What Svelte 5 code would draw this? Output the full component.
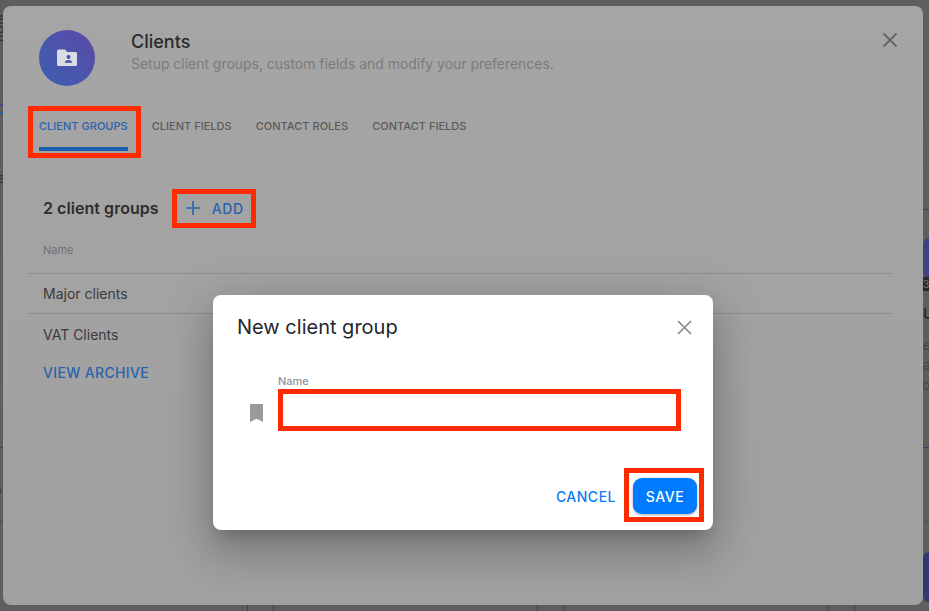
<script>
  const tabs = ['CLIENT GROUPS', 'CLIENT FIELDS', 'CONTACT ROLES', 'CONTACT FIELDS'];
  const groups = ['Major clients', 'VAT Clients'];
</script>

<div class="page">
  <!-- bits of the page behind the dimmed dialog, only the edges show -->
  <div class="behind">
    <span class="line l1"></span>
    <span class="line l2"></span>
    <span class="line l3"></span>
    <span class="line r1"></span>
    <span class="line r2"></span>
    <span class="line r3"></span>
    <span class="line t1"></span>
    <span class="line t2"></span>
    <span class="word w1">Nov</span>
    <span class="word w2">le</span>
    <span class="word w3">o</span>
    <span class="word w4">UI</span>
    <span class="word w5">e</span>
    <span class="word w6">a</span>
    <span class="word w7">o</span>
    <span class="logo"></span>
    <span class="tag">35</span>
    <span class="ball"></span>
    <span class="tick k1"></span>
    <span class="tick k2"></span>
    <span class="tick k3"></span>
    <span class="tick k4"></span>
    <span class="tick k5"></span>
    <span class="tick k6"></span>
  </div>

  <section class="settings">
    <header class="head">
      <div class="avatar">
        <svg width="22" height="20" viewBox="0 0 22 20">
          <path fill="#dcdce4" d="M2.500 1.500h6.500l2.200 2.400h8.300a1.500 1.500 0 0 1 1.500 1.500v11a1.500 1.500 0 0 1-1.500 1.500h-17A1.500 1.500 0 0 1 1 16.900v-13.900a1.500 1.500 0 0 1 1.500-1.500z" />
          <circle cx="12.500" cy="8.900" r="2" fill="#4a50a8" />
          <path fill="#4a50a8" d="M8.600 14.800c0-1.900 2.100-2.900 3.900-2.900s3.900 1 3.900 2.900z" />
        </svg>
      </div>
      <div class="titles">
        <h1>Clients</h1>
        <p>Setup client groups, custom fields and modify your preferences.</p>
      </div>
      <button class="close" aria-label="Close">
        <svg width="16" height="16" viewBox="0 0 16 16"><path d="M1.500 1.500l13 13M14.500 1.500l-13 13" stroke="#666" stroke-width="1.800" fill="none" /></svg>
      </button>
    </header>

    <nav class="tabs">
      {#each tabs as tab, i}
        <div class="tab" class:active={i === 0}>{tab}</div>
      {/each}
    </nav>

    <div class="count-row">
      <strong>2 client groups</strong>
      <div class="add">
        <svg width="14" height="14" viewBox="0 0 14 14"><path d="M7 0v14M0 7h14" stroke="#2a62ad" stroke-width="1.600" /></svg>
        <span>ADD</span>
      </div>
    </div>

    <div class="table">
      <div class="th">Name</div>
      {#each groups as group}
        <div class="td">{group}</div>
      {/each}
    </div>
    <div class="archive">VIEW ARCHIVE</div>
  </section>

  <div class="modal">
    <div class="modal-head">
      <h2>New client group</h2>
      <button class="close" aria-label="Close">
        <svg width="15" height="15" viewBox="0 0 15 15"><path d="M1 1l13 13M14 1L1 14" stroke="#8a8a8a" stroke-width="1.700" fill="none" /></svg>
      </button>
    </div>
    <div class="field">
      <svg class="bookmark" width="15" height="18" viewBox="0 0 15 18"><path fill="#9a9a9a" d="M2 0h11a1 1 0 0 1 1 1v17l-6.500-3.200L1 18V1a1 1 0 0 1 1-1z" /></svg>
      <div class="field-main">
        <label for="name">Name</label>
        <input id="name" />
      </div>
    </div>
    <div class="actions">
      <span class="cancel">CANCEL</span>
      <button class="save">SAVE</button>
    </div>
  </div>

  <span class="mark m-tab"></span>
  <span class="mark m-add"></span>
  <span class="mark m-input"></span>
  <span class="mark m-save"></span>
</div>

<style>
  :global(body) {
    margin: 0;
    font-family: Inter, "Liberation Sans", sans-serif;
  }

  .page {
    position: relative;
    width: 929px;
    height: 611px;
    overflow: hidden;
    background: #5e5e5e;
    padding: 6px 6px 6px 3px;
    box-sizing: border-box;
  }

  .behind span {
    position: absolute;
  }

  .line {
    height: 1px;
    background: #474747;
  }

  .l1 { left: 0; width: 3px; top: 447px; }
  .l2 { left: 0; width: 3px; top: 521px; }
  .l3 { left: 0; width: 3px; top: 179px; background: #4b4a78; }
  .r1 { right: 0; width: 6px; top: 209px; background: #3c3a70; }
  .r2 { right: 0; width: 6px; top: 447px; background: #3c3a70; }
  .r3 { right: 0; width: 6px; top: 521px; background: #3d5a3a; }
  .t1 { left: 0; width: 3px; top: 104px; background: #3f4a80; height: 2px; }
  .t2 { left: 0; width: 3px; top: 112px; background: #2f5f92; height: 2px; }

  .word {
    font-size: 14px;
    line-height: 16px;
    color: #333;
  }

  .w1 { left: -8px; top: 14px; font-size: 15px; writing-mode: vertical-rl; }
  .w2 { left: -6px; top: 170px; }
  .w3 { left: -7px; top: 482px; }
  .w4 { left: 923px; top: 306px; font-weight: 700; color: #2e2e2e; }
  .w5 { left: 923px; top: 337px; color: #444; }
  .w6 { left: 923px; top: 357px; color: #444; }
  .w7 { left: 922px; top: 377px; color: #444; }

  .logo {
    right: 0;
    top: 238px;
    width: 6px;
    height: 40px;
    background: #3f4280;
    border-radius: 20px 0 0 20px;
  }

  .tag {
    right: 0;
    top: 277px;
    width: 6px;
    height: 14px;
    overflow: hidden;
    background: #2a2a2a;
    color: #777;
    font-size: 10px;
    line-height: 14px;
  }

  .ball {
    right: 0;
    top: 552px;
    width: 6px;
    height: 50px;
    background: #34386e;
    border-radius: 30px 0 0 30px;
  }

  .tick {
    top: 605px;
    width: 1px;
    height: 6px;
    background: #35482f;
  }

  .k1 { left: 247px; }
  .k2 { left: 273px; }
  .k3 { left: 537px; }
  .k4 { left: 563px; }
  .k5 { left: 828px; }
  .k6 { left: 854px; }

  .settings {
    position: relative;
    height: 599px;
    background: linear-gradient(#a5a5a5, #a0a0a0);
    border-radius: 8px;
    box-sizing: border-box;
    padding: 24px 31px 0 25px;
  }

  .head {
    display: flex;
    align-items: flex-start;
    padding-left: 11px;
  }

  .avatar {
    width: 56px;
    height: 56px;
    border-radius: 50%;
    background: linear-gradient(45deg, #3b5fb0, #5c4aa8);
    display: flex;
    align-items: center;
    justify-content: center;
    flex: none;
  }

  .titles {
    margin-left: 36px;
    flex: 1;
  }

  h1 {
    margin: 1px 0 0;
    font-size: 18px;
    line-height: 22px;
    font-weight: 500;
    color: #2a2a2c;
  }

  .titles p {
    margin: 1px 0 0;
    font-size: 14px;
    line-height: 20px;
    letter-spacing: -0.03px;
    color: #7b7b7b;
  }

  .close {
    border: 0;
    padding: 0;
    background: none;
    display: flex;
  }

  .head .close {
    margin: 2px -6px 0 0;
  }

  .tabs {
    display: flex;
    gap: 24px;
    margin: 34px 0 0 11px;
  }

  .tab {
    font-size: 11px;
    line-height: 13px;
    font-weight: 500;
    letter-spacing: 0.02px;
    padding-bottom: 14px;
    border-bottom: 4px solid transparent;
    color: #5b5b5b;
  }

  .tab.active {
    color: #2a62ad;
    border-bottom-color: #1c5db0;
  }

  .count-row {
    display: flex;
    align-items: center;
    margin: 46px 0 0 15px;
    height: 22px;
  }

  .count-row strong {
    font-size: 16px;
    font-weight: 600;
    letter-spacing: 0.05px;
    color: #2d2d30;
  }

  .add {
    display: flex;
    align-items: center;
    gap: 12px;
    margin-left: 27px;
    font-size: 14px;
    letter-spacing: 0.6px;
    font-weight: 500;
    color: #2a62ad;
  }

  .table {
    margin-top: 24px;
  }

  .th {
    font-size: 11px;
    line-height: 14px;
    color: #707070;
    padding: 0 0 16px 15px;
    border-bottom: 1px solid #8e8e8e;
  }

  .td {
    font-size: 14px;
    line-height: 20px;
    color: #3a3a3c;
    padding: 10px 0 9px 15px;
    border-bottom: 1px solid #8e8e8e;
  }

  .td:last-child {
    padding: 11px 0 9px 15px;
    border-bottom: 0;
  }

  .archive {
    margin: 9px 0 0 15px;
    font-size: 14px;
    line-height: 20px;
    font-weight: 500;
    letter-spacing: 0.35px;
    color: #2a62ad;
  }

  .modal {
    position: absolute;
    left: 213px;
    top: 295px;
    width: 500px;
    height: 235px;
    background: #fff;
    border-radius: 8px;
    box-sizing: border-box;
    padding: 20px 21px 0 24px;
    box-shadow: 0 11px 15px -7px rgba(0, 0, 0, 0.2), 0 24px 38px 3px rgba(0, 0, 0, 0.14), 0 9px 46px 8px rgba(0, 0, 0, 0.12);
  }

  .modal-head {
    display: flex;
    justify-content: space-between;
    align-items: center;
  }

  h2 {
    margin: 0;
    font-size: 20px;
    line-height: 24px;
    font-weight: 400;
    color: #23262f;
  }

  .field {
    display: flex;
    align-items: flex-end;
    margin: 35px 0 0 12px;
  }

  .bookmark {
    flex: none;
  }

  .field-main {
    flex: 1;
    margin-left: 14px;
    margin-right: 10px;
  }

  label {
    display: block;
    font-size: 11px;
    line-height: 14px;
    color: #8a94a0;
    font-weight: 500;
  }

  input {
    display: block;
    width: 100%;
    height: 32px;
    border: 0;
    padding: 0;
    outline: 0;
    margin-top: 2px;
  }

  .actions {
    display: flex;
    justify-content: flex-end;
    align-items: center;
    gap: 17px;
    margin: 56px -5px 0 0;
  }

  .cancel {
    font-size: 14px;
    font-weight: 500;
    letter-spacing: 0.5px;
    color: #0a7cf0;
  }

  .save {
    width: 64px;
    height: 36px;
    border: 0;
    border-radius: 9px;
    background: #007bff;
    color: #fff;
    font-family: inherit;
    font-size: 14px;
    font-weight: 500;
    letter-spacing: 0.5px;
    box-shadow: 0 1px 3px rgba(0, 0, 0, 0.35);
  }

  .mark {
    position: absolute;
    box-sizing: border-box;
    border: 5px solid #ff2a00;
  }

  .m-tab { left: 28px; top: 106px; width: 113px; height: 52px; }
  .m-add { left: 172px; top: 189px; width: 84px; height: 39px; }
  .m-input { left: 278px; top: 389px; width: 403px; height: 42px; }
  .m-save { left: 624px; top: 468px; width: 80px; height: 54px; }
</style>
